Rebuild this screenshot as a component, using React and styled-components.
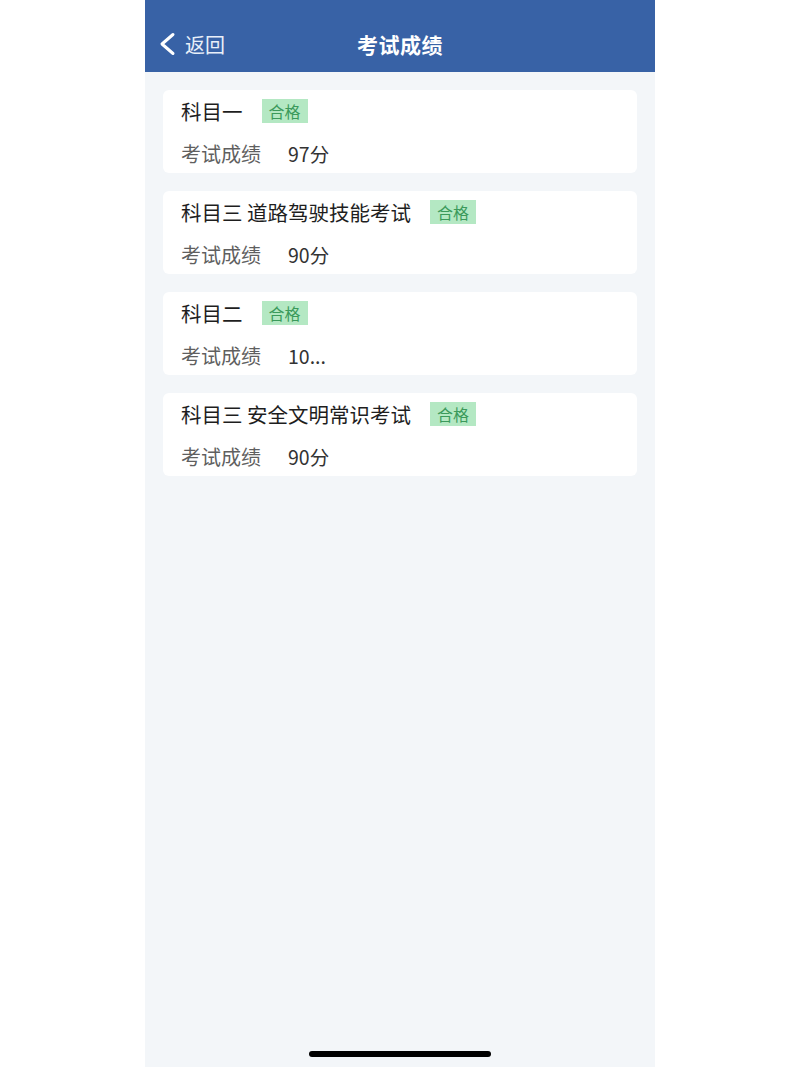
import React from "react";
import styled, { createGlobalStyle } from "styled-components";

const Global = createGlobalStyle`
  html, body { margin: 0; padding: 0; background: #ffffff; }
  body { font-family: "Noto Sans CJK SC", "Noto Sans", sans-serif; }
`;

const Phone = styled.div`
  width: 510px;
  height: 1067px;
  margin: 0 auto;
  background: #f3f6f9;
  display: flex;
  flex-direction: column;
  position: relative;
`;

const Header = styled.header`
  height: 72px;
  background: #3862a6;
  display: grid;
  grid-template-columns: 1fr auto 1fr;
  align-items: center;
  padding: 0 14px 0 14px;
  box-sizing: border-box;
  color: #ffffff;
`;

const Back = styled.div`
  display: flex;
  align-items: center;
  gap: 9px;
  padding-top: 16px;
  font-size: 20px;
  color: #e9eff9;
`;

const Title = styled.h1`
  margin: 0;
  padding-top: 16px;
  font-size: 21px;
  font-weight: 700;
  letter-spacing: 0.5px;
`;

const List = styled.div`
  display: flex;
  flex-direction: column;
  gap: 18px;
  padding: 18px 18px 0;
`;

const Card = styled.div`
  background: #ffffff;
  border-radius: 6px;
  padding: 9px 18px 7px;
  display: flex;
  flex-direction: column;
  gap: 19px;
`;

const Row = styled.div`
  display: flex;
  align-items: center;
  height: 24px;
  gap: ${(p) => p.$gap}px;
`;

const Subject = styled.span`
  font-size: 20.5px;
  color: #1e1e1e;
  line-height: 24px;
`;

const Badge = styled.span`
  background: #b4e8c3;
  color: #3b9a5b;
  font-size: 16px;
  line-height: 24px;
  height: 24px;
  padding: 0 7px;
`;

const Label = styled.span`
  font-size: 20px;
  color: #5f5f5f;
  line-height: 24px;
`;

const Value = styled.span`
  font-size: 19.5px;
  color: #333333;
  line-height: 24px;
`;

const HomeBar = styled.div`
  position: absolute;
  left: 164px;
  bottom: 10px;
  width: 182px;
  height: 6px;
  border-radius: 3px;
  background: #000000;
`;

const items = [
  { name: "科目一", score: "97分" },
  { name: "科目三 道路驾驶技能考试", score: "90分" },
  { name: "科目二", score: "10..." },
  { name: "科目三 安全文明常识考试", score: "90分" },
];

export default function App() {
  return (
    <>
      <Global />
      <Phone>
        <Header>
          <Back>
            <svg width="17" height="24" viewBox="0 0 17 24">
              <path d="M14 2.5 L3 12 L14 21.5" fill="none" stroke="#ffffff" strokeWidth="3" strokeLinecap="round" strokeLinejoin="round" />
            </svg>
            返回
          </Back>
          <Title>考试成绩</Title>
          <div />
        </Header>
        <List>
          {items.map((it, i) => (
            <Card key={i}>
              <Row $gap={19}>
                <Subject>{it.name}</Subject>
                <Badge>合格</Badge>
              </Row>
              <Row $gap={27}>
                <Label>考试成绩</Label>
                <Value>{it.score}</Value>
              </Row>
            </Card>
          ))}
        </List>
        <HomeBar />
      </Phone>
    </>
  );
}
